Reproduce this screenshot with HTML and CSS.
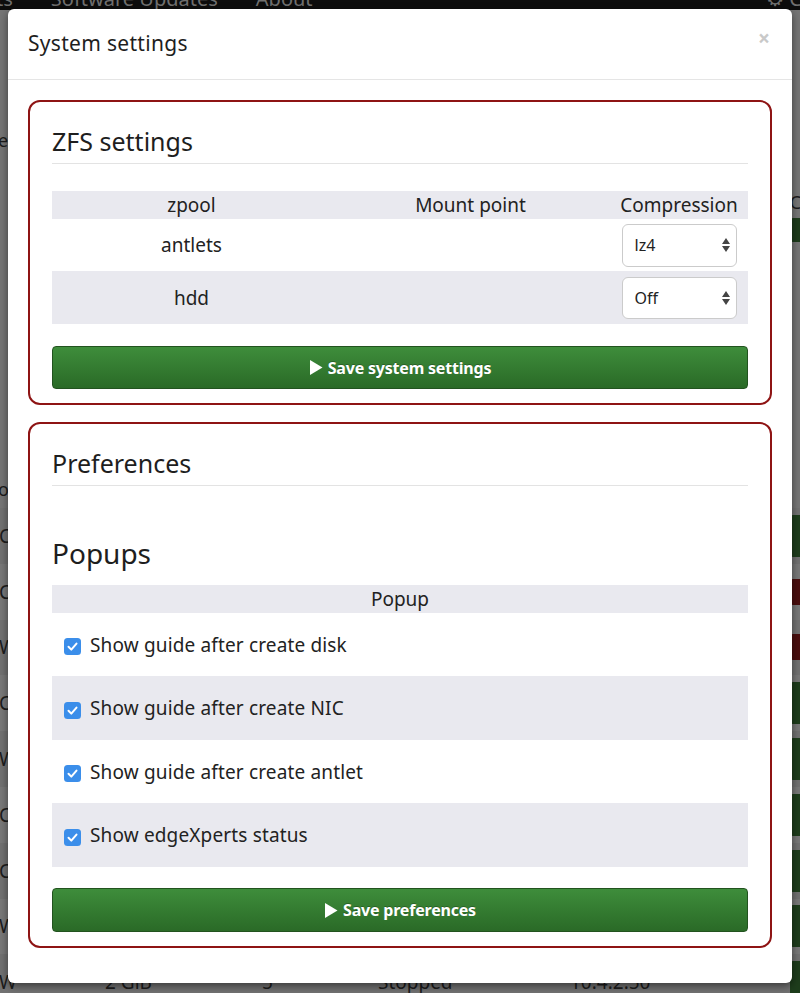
FILE: index.html
```html
<!DOCTYPE html>
<html lang="en">
<head>
<meta charset="utf-8">
<title>System settings</title>
<link rel="stylesheet" href="styles.css">
</head>
<body>
<div class="page">
  <div class="navbar">
    <span class="nav-item nav-first">ts</span>
    <span class="nav-item">Software Updates</span>
    <span class="nav-item">About</span>
    <span class="nav-item nav-right">⚙ Co</span>
  </div>
  <div class="page-head">
    <div class="head-left">
      <span class="edge-letter">e</span>
      <span class="edge-letter low">o</span>
    </div>
    <div class="head-right">
      <div class="head-label">Co</div>
      <div class="head-btn"></div>
    </div>
  </div>
  <div class="prow"><span class="pname">C</span><span></span><span></span><span></span><span></span><span class="pbtn"></span></div>
  <div class="prow alt"><span class="pname">C</span><span></span><span></span><span></span><span></span><span class="pbtn red"></span></div>
  <div class="prow"><span class="pname">W</span><span></span><span></span><span></span><span></span><span class="pbtn red"></span></div>
  <div class="prow alt"><span class="pname">C</span><span></span><span></span><span></span><span></span><span class="pbtn"></span></div>
  <div class="prow"><span class="pname">W</span><span></span><span></span><span></span><span></span><span class="pbtn"></span></div>
  <div class="prow alt"><span class="pname">C</span><span></span><span></span><span></span><span></span><span class="pbtn"></span></div>
  <div class="prow"><span class="pname">C</span><span></span><span></span><span></span><span></span><span class="pbtn"></span></div>
  <div class="prow alt"><span class="pname">W</span><span></span><span></span><span></span><span></span><span class="pbtn"></span></div>
  <div class="prow"><span class="pname">W</span><span>2 GiB</span><span>5</span><span>Stopped</span><span>10.4.2.50</span><span class="pbtn"></span></div>
</div>

<div class="modal">
  <div class="modal-header">
    <h4 class="modal-title">System settings</h4>
    <span class="close">×</span>
  </div>
  <div class="modal-body">
    <section class="panel">
      <h3 class="panel-title">ZFS settings</h3>
      <hr class="rule">
      <div class="zfs-table">
        <div class="zrow zhead"><span>zpool</span><span>Mount point</span><span>Compression</span></div>
        <div class="zrow"><span>antlets</span><span></span>
          <span class="cell-select"><span class="select"><span>lz4</span>
            <svg class="arrows" width="10" height="16" viewBox="0 0 10 16"><path d="M5 1 L9 7 L1 7 Z M5 15 L9 9 L1 9 Z" fill="#444"/></svg>
          </span></span></div>
        <div class="zrow grey"><span>hdd</span><span></span>
          <span class="cell-select"><span class="select"><span>Off</span>
            <svg class="arrows" width="10" height="16" viewBox="0 0 10 16"><path d="M5 1 L9 7 L1 7 Z M5 15 L9 9 L1 9 Z" fill="#444"/></svg>
          </span></span></div>
      </div>
      <div class="btn-save">
        <svg class="play" width="14" height="17" viewBox="0 0 14 17"><path d="M1 1 L13.5 8.5 L1 16 Z" fill="#fff"/></svg>
        <span>Save system settings</span>
      </div>
    </section>

    <section class="panel">
      <h3 class="panel-title">Preferences</h3>
      <hr class="rule">
      <h2 class="popups-title">Popups</h2>
      <div class="popup-table">
        <div class="prow-head">Popup</div>
        <div class="check-row">
          <svg class="cb" width="17" height="17" viewBox="0 0 17 17"><rect x="0" y="0" width="17" height="17" rx="3.5" fill="#3b8eea"/><path d="M4.5 8.8 L7.3 11.6 L12.5 5.6" fill="none" stroke="#fff" stroke-width="2" stroke-linecap="round" stroke-linejoin="round"/></svg>
          <span>Show guide after create disk</span>
        </div>
        <div class="check-row grey">
          <svg class="cb" width="17" height="17" viewBox="0 0 17 17"><rect x="0" y="0" width="17" height="17" rx="3.5" fill="#3b8eea"/><path d="M4.5 8.8 L7.3 11.6 L12.5 5.6" fill="none" stroke="#fff" stroke-width="2" stroke-linecap="round" stroke-linejoin="round"/></svg>
          <span>Show guide after create NIC</span>
        </div>
        <div class="check-row">
          <svg class="cb" width="17" height="17" viewBox="0 0 17 17"><rect x="0" y="0" width="17" height="17" rx="3.5" fill="#3b8eea"/><path d="M4.5 8.8 L7.3 11.6 L12.5 5.6" fill="none" stroke="#fff" stroke-width="2" stroke-linecap="round" stroke-linejoin="round"/></svg>
          <span>Show guide after create antlet</span>
        </div>
        <div class="check-row grey">
          <svg class="cb" width="17" height="17" viewBox="0 0 17 17"><rect x="0" y="0" width="17" height="17" rx="3.5" fill="#3b8eea"/><path d="M4.5 8.8 L7.3 11.6 L12.5 5.6" fill="none" stroke="#fff" stroke-width="2" stroke-linecap="round" stroke-linejoin="round"/></svg>
          <span>Show edgeXperts status</span>
        </div>
      </div>
      <div class="btn-save btn-pref">
        <svg class="play" width="14" height="17" viewBox="0 0 14 17"><path d="M1 1 L13.5 8.5 L1 16 Z" fill="#fff"/></svg>
        <span>Save preferences</span>
      </div>
    </section>
  </div>
</div>
</body>
</html>
```

FILE: styles.css
```css
* { box-sizing: border-box; }

html, body {
  margin: 0;
  width: 800px;
  height: 993px;
  overflow: hidden;
}

body {
  position: relative;
  font-family: "Noto Sans", "Open Sans", "DejaVu Sans", sans-serif;
  background: #767676;
}

/* ---------- dimmed page behind the modal ---------- */
.page {
  height: 993px;
  overflow: hidden;
  background: #767676;
  color: #1c1c1c;
}

.navbar {
  height: 10px;
  background: #0d0d0d;
  display: flex;
  gap: 38px;
  overflow: hidden;
  color: #707070;
  font-size: 20px;
  line-height: 20px;
}

.nav-item { margin-top: -11px; white-space: nowrap; }
.nav-first { margin-left: -4px; }
.nav-right { margin-left: auto; margin-right: -14px; }

.page-head {
  height: 498px;
  display: flex;
  justify-content: space-between;
}

.head-left {
  display: flex;
  flex-direction: column;
  font-size: 18px;
  padding-top: 118px;
}

.edge-letter { margin-left: -2px; }
.edge-letter.low { margin-top: 325px; }

.head-right {
  display: flex;
  flex-direction: column;
  align-items: flex-end;
  padding-top: 180px;
}

.head-label {
  font-size: 18px;
  margin-right: -12px;
}

.head-btn {
  width: 40px;
  height: 24px;
  margin-top: 4px;
  background: #1d3b1b;
  border-radius: 3px;
  margin-right: -30px;
}

.prow {
  display: grid;
  grid-template-columns: 105px 157px 116px 192px 220px 60px;
  height: 55.8px;
  align-items: center;
  font-size: 19px;
  white-space: nowrap;
  background: #727272;
}

.prow.alt { background: #797979; }

.pname { margin-left: -1px; }

.pbtn {
  width: 50px;
  height: 42px;
  background: #1e3d1c;
  border-radius: 3px;
}

.pbtn.red {
  background: #4a0e0e;
  height: 26px;
}

/* ---------- modal ---------- */
.modal {
  position: absolute;
  top: 9px;
  left: 8px;
  width: 784px;
  background: #fff;
  border-radius: 6px;
  box-shadow: 0 3px 9px rgba(0, 0, 0, 0.5);
  color: #222;
}

.modal-header {
  display: flex;
  justify-content: space-between;
  align-items: center;
  padding: 18px 22px 20px 20px;
  border-bottom: 1px solid #e5e5e5;
}

.modal-title {
  margin: 0;
  font-size: 21px;
  line-height: 32px;
  font-weight: 400;
  letter-spacing: 0.3px;
  color: #1e1e1e;
}

.close {
  font-size: 21px;
  font-weight: 700;
  line-height: 20px;
  color: #c9c9c9;
  margin-top: -10px;
}

.modal-body {
  padding: 20px 20px 35px;
}

.panel {
  border: 2px solid #8e1414;
  border-radius: 12px;
  padding: 0 22px 14px;
}

.panel + .panel { margin-top: 17px; }

.panel-title {
  margin: 24px 0 0;
  font-size: 25px;
  line-height: 30px;
  font-weight: 400;
  color: #1e1e1e;
}

.rule {
  border: 0;
  border-top: 1px solid #e3e3e3;
  margin: 7px 0 0;
  height: 0;
}

/* ZFS table */
.zfs-table { margin-top: 27px; }

.zrow {
  display: grid;
  grid-template-columns: 1fr 1fr 138px;
  align-items: center;
  text-align: center;
  font-size: 19px;
  height: 52px;
}

.zrow.zhead {
  height: 28px;
  background: #e9e9ef;
}

.zrow.grey {
  height: 53px;
  background: #e9e9ef;
}

.cell-select {
  display: flex;
  justify-content: center;
}

.select {
  width: 115px;
  height: 43px;
  display: flex;
  align-items: center;
  justify-content: space-between;
  padding: 0 5px 0 12px;
  border: 1px solid #cbcbcb;
  border-radius: 6px;
  background: #fff;
  font-size: 16px;
  color: #222;
  text-align: left;
}

.zrow.grey .select { height: 42px; }

/* buttons */
.btn-save {
  margin-top: 22px;
  height: 43px;
  display: flex;
  align-items: center;
  justify-content: center;
  gap: 5px;
  border: 1px solid #22531f;
  border-radius: 4px;
  background: linear-gradient(#3e8d3b, #2a6a27);
  color: #fff;
  font-size: 16px;
  font-weight: 700;
  letter-spacing: -0.2px;
  text-shadow: 0 -1px 0 rgba(0, 0, 0, 0.25);
}

.btn-pref {
  margin-top: 21px;
  height: 44px;
}

/* preferences */
.popups-title {
  margin: 50px 0 0;
  font-size: 28px;
  line-height: 34px;
  font-weight: 400;
  color: #1e1e1e;
}

.popup-table { margin-top: 15px; }

.prow-head {
  height: 28px;
  line-height: 28px;
  text-align: center;
  background: #e9e9ef;
  font-size: 19px;
}

.check-row {
  height: 63px;
  display: flex;
  align-items: center;
  gap: 9px;
  padding-left: 12px;
  font-size: 19px;
  letter-spacing: 0.15px;
}

.check-row.grey {
  height: 64px;
  background: #e9e9ef;
}

.cb { flex: none; margin-top: 4px; }
```
